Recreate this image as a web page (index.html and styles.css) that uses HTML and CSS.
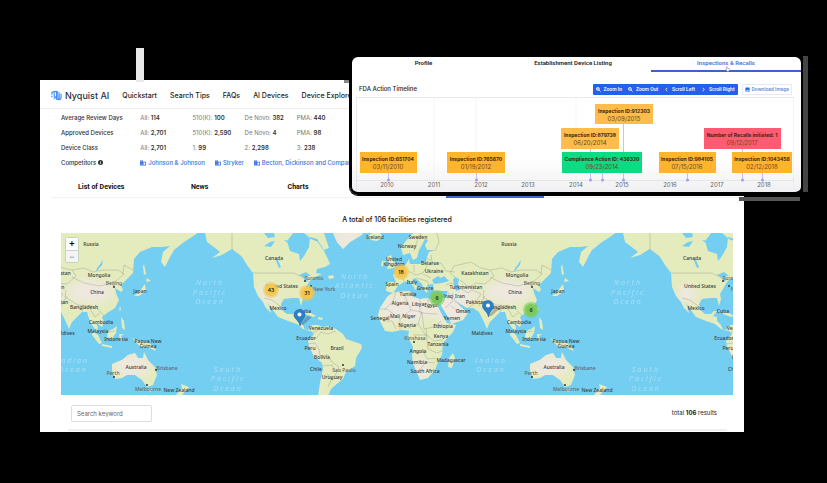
FILE: index.html
```html
<!DOCTYPE html>
<html lang="en">
<head>
<meta charset="utf-8">
<title>Nyquist AI</title>
<link rel="stylesheet" href="styles.css">
</head>
<body>
<main class="panel">
  <span class="accent accent-stem"></span>
  <span class="accent accent-notch"></span>
  <header class="topbar">
    <a class="brand" href="#">
      <svg class="brand-mark" viewBox="0 0 24 22" aria-hidden="true">
        <g fill="none" stroke="#3f8df5" stroke-width="2.500" stroke-linecap="round">
          <path d="M2 8V5.500a2.500 2.500 0 0 1 5 0V13a2 2 0 0 0 4 0"/>
          <path d="M2 12v2M7 17v1M6 2.500c3-2 6 0 6 3V16a3 3 0 0 0 6 0V9"/>
          <path d="M11 2c3 0 4 2 4 4v9M18 5v1M22 8v7c0 3-2 5-5 5-3 0-6-1-6-4"/>
        </g>
      </svg>
      <span>Nyquist AI</span>
    </a>
    <nav class="nav">
      <a href="#">Quickstart</a><a href="#">Search Tips</a><a href="#">FAQs</a><a href="#">AI Devices</a><a href="#">Device Explorer</a>
    </nav>
  </header>

  <table class="stats">
    <tr><th scope="row">Average Review Days</th><td>All: <b>114</b></td><td>510(K): <b>100</b></td><td>De Novo: <b>382</b></td><td>PMA: <b>440</b></td></tr>
    <tr><th scope="row">Approved Devices</th><td>All: <b>2,701</b></td><td>510(K): <b>2,590</b></td><td>De Novo: <b>4</b></td><td>PMA: <b>98</b></td></tr>
    <tr><th scope="row">Device Class</th><td>All: <b>2,701</b></td><td>1: <b>99</b></td><td>2: <b>2,298</b></td><td>3: <b>238</b></td></tr>
    <tr><th scope="row">Competitors <svg class="info" viewBox="0 0 10 10" aria-hidden="true"><circle cx="5" cy="5" r="5" fill="#333"/><path d="M5 4.500V8M5 2v1.200" stroke="#fff" stroke-width="1.500"/></svg></th>
      <td colspan="4"><div class="companies">
        <a href="#"><svg viewBox="0 0 12 12" aria-hidden="true"><path fill="#3b6fe0" fill-rule="evenodd" d="M0 1h6v2.500h6V11H0zM1.500 3v1h1V3zm2 0v1h1V3zm-2 2.500v1h1v-1zm2 0v1h1v-1zm-2 2.500v1h1V8zm2 0v1h1V8zM7 5v4.500h3.500V5z"/></svg>Johnson &amp; Johnson</a>
        <a href="#"><svg viewBox="0 0 12 12" aria-hidden="true"><path fill="#3b6fe0" fill-rule="evenodd" d="M0 1h6v2.500h6V11H0zM1.500 3v1h1V3zm2 0v1h1V3zm-2 2.500v1h1v-1zm2 0v1h1v-1zm-2 2.500v1h1V8zm2 0v1h1V8zM7 5v4.500h3.500V5z"/></svg>Stryker</a>
        <a href="#"><svg viewBox="0 0 12 12" aria-hidden="true"><path fill="#3b6fe0" fill-rule="evenodd" d="M0 1h6v2.500h6V11H0zM1.500 3v1h1V3zm2 0v1h1V3zm-2 2.500v1h1v-1zm2 0v1h1v-1zm-2 2.500v1h1V8zm2 0v1h1V8zM7 5v4.500h3.500V5z"/></svg>Becton, Dickinson and Company</a>
      </div></td></tr>
  </table>

  <nav class="tabs"><a href="#">List of Devices</a><a href="#">News</a><a href="#">Charts</a><span></span><span class="current"></span></nav>

  <h2 class="map-title">A total of 106 facilities registered</h2>

  <div class="map">
    <svg class="map-canvas" viewBox="0 0 672 162" role="img" aria-label="Facilities map">
      <defs>
        <filter id="soft" x="-30%" y="-30%" width="160%" height="160%"><feGaussianBlur stdDeviation="4"/></filter>
        <path id="land" d="M144 0l2 9 8 6 5 4-8 6 10-3 8-5 2-1 10 8 5 8 6 8 1 14 4 9 5 6 3 6 5 5-1-5-3-6 8 11 3 4 10 4 9 3 6 5 5 1 4-5h6l5 2 5-1 8 3 7 5 3 5 15 5 1 4-6 10-1 8-9 6-3 7-5 4-7 6-3 7h-10l2-13 3-14-1-6-8-7-5-10-1-5 6-7-3-3-6-1-2-5-4-4v-4l-4-1 4-5h-3l-3 3h-6l-5-4-1-6 3-5 8-1h7l2 8 2-7-1-5 3-5 4-7 6-5 7-3-6-1 1-4 8-2 5-3-3-7-5-10-5-8-7-2-1 10-5 9-4 5-1-7-9-3-3-10 7-9 3-5z
          M243 0h20l3 9 2 6-6 2-5-8-7-3z M272 0l4 9 6 7 7-7 12-7 1-2z M307 3l3 4 6 1 6-4-3-4h-8z
          M244 79l6 1 5 3-3 1-8-3zM257 84l5 1-1 2-4-1zM267 43l5-1 1 3-5 1z
          M328 62l6-3 15-1 3 6 7 2 8-1 7 2 3 7 5 10 4 6 9 2-3 7-10 11-1 12-4 7-3 8-7 8-8 2-2-5-5-12-1-8 1-8-5-10 1-6-7-1-10 2-7-1-5-10-2-6 2-7 7-11z M392 120l2 5-3 10-4-1 1-9z
          M352 0l-8 9-4 6 2 7 7-2 3 7 4-2 2-8 3-5 3-6 3 1-3 5 2 5 8 0-6 2-2 5-1 5-7 2-9 0-1-5-3 5-7 6-6 5 3 7h-9l-1 9 7 2 5-7 6-4 5-1 5 6 1 3 3-3-6-7 3-2 7 6 2 6 3 3 1-5-1-3 6-1 1 7h13v6h-10l5 10 8 13 1 4 12-4 5-7-7-6-8-8 9 6 5 3h6l6 4 5 10 3 7 3-7 10-10h5l3 10 7 10 1-5-3-5 7 5 2-5-2-5 5-4 8-5 4-8-3-7-1-5 6 4 2-2-2-5 7-7 5-5 1-14 6-7 12-5h10l8-1-7 6-2 10 4 5 5-10 4-7 10-8 8-5 7-5z
          M326 36l7-1 2-4-3-3-2-6-4 2 2 5zM320 33l4 0 1-5-4 0z
          M501 31l2 10-2 1-1-8zM504 45l4 3-5 1zM502 51l1 7-7 5-5 0 5-4z
          M477 73l1 4-2 1zM478 84l3 4 1 9-3-2zM450 98l5 4 4 8-3 1-7-9zM459 111l10 2 0 2-10-2zM465 98l5-2 4-3-1 7-4 6-5-2zM476 101l5 0-3 2 2 5-3 0zM489 105l7 3 8 1 6 4 3 5-9-4-6 1-5-6z
          M469 137l0-6 10-4 6-5 7-2 3 5 5 0 1-6 4 8 7 7 2 8-4 10-6 2-5-7-7-5h-8l-5 3-7 1z M505 156l5 0-3 3z M538 151l8 3-7 8h-6l6-7z"/>
        <clipPath id="coast"><use href="#land"/></clipPath>
        <g id="world">
          <use href="#land" fill="#e4ebbd"/>
          <g clip-path="url(#coast)">
            <g fill="#eee8df" filter="url(#soft)">
              <ellipse cx="345" cy="75" rx="29" ry="14"/><ellipse cx="388" cy="75" rx="18" ry="16"/><ellipse cx="447" cy="59" rx="23" ry="12"/><ellipse cx="489" cy="133" rx="19" ry="12"/><ellipse cx="405" cy="61" rx="15" ry="6"/><ellipse cx="285" cy="5" rx="14" ry="12"/><ellipse cx="361" cy="136" rx="9" ry="12"/><ellipse cx="252" cy="135" rx="5" ry="25"/><ellipse cx="208" cy="61" rx="10" ry="10"/>
            </g>
            <g fill="#73cef1">
              <path d="M371 47l6-4 3 2 3-2 5 5-7 2-8 1zM394 44l4 2-1 5 2 6-4 1-2-6-1-5zM203 13l6-4 5-1-4 6zM214 25l3 2 3 7-2 1zM238 42l7-3 5 4-5 0 2 6-3-1-2-4zM248 48l7-2-4 4zM203 0l4 5 7-1-1-4zM223 7l6 1 4-3-5 6zM453 37l7-10-1 5-5 6zM377 91l2 3-2 2z"/>
            </g>
            <path fill="none" stroke="#8c9188" stroke-width=".6" opacity=".6" d="M171 0v17l9 6 5 11M192 40h41l8 4 9 3 10-4M203 65l8 2 8 6 4 5M250 100l6-2 4-6M247 103l8 3 5-7 7 2 8-3M246 111l8-1 4 6 1 7 8-1 4 7 7 5-4 9M256 130l5 3 10-1 3 6M258 135l-2 27M266 141l5 4-4 9M335 59l-3 9-9 9M319 76h7l13 10 11-9-7-16M322 88h9l4 8M339 86v11M350 77l11 2-4 12-10 4M359 66v14l17 1M367 65v8h9M361 79l2 17 10-2 7-6M352 102h14l7 6 9-1M365 96l2 20 9 4 5-2M351 118h11l4 8 9-1M357 139l8-10 9 1M357 91l9 13M347 38l8 4 7-2 5-9M343 49l-3-9M353 39l0-7M362 41l8 4M367 31l13-1 5 8 9 1M355 45l11 3 2 4M385 52l5-2 5 3M386 58l6 10-8 7M390 73l8 6 5-1M391 60l4 10M399 55l8 5 4-3 9 4-7 10-6 4M394 44l-5-4 4-7 17-4 10 6 9 2 4 6-9 8-9-1-6 5-10-8M429 37l12-2 9 4 10-2 15 0 6 4-9 8-15 4-16-3-12-6M480 41l1-9 9 5M423 57l-1 7 13 8 13 1 7 3M418 73l6-10M439 79l2-6M447 76l5 8 5-4M455 76l7 8M465 99l7-1M501 109v6M374 18l4-9-2-9M353 18l4-13 3-5M364 25l6 2M370 22l1 7"/>
          </g>
          <g class="place">
            <text x="448" y="13">Russia</text><text x="456" y="44">Mongolia</text><text x="454" y="61">China</text><text x="471" y="52" class="city">Beijing</text><text x="497" y="60">Japan</text><text x="441" y="76">Bangladesh</text><text x="458" y="91">Cambodia</text><text x="455" y="100">Malaysia</text><text x="473" y="108">Indonesia</text><text x="505" y="110">Papua New</text><text x="505" y="115">Guinea</text><text x="493" y="136">Australia</text><text x="470" y="142" class="city">Perth</text><text x="524" y="137" class="city">Brisbane</text><text x="505" y="158" class="city">Melbourne</text><text x="536" y="159">New Zealand</text>
            <text x="213" y="27">Canada</text><text x="221" y="55">United States</text><text x="253" y="47" class="city">Toronto</text><text x="263" y="58" class="city">New York</text><text x="217" y="77">Mexico</text><text x="244" y="80">Cuba</text><text x="260" y="97">Venezuela</text><text x="245" y="107">Ecuador</text><text x="249" y="117">Peru</text><text x="276" y="117">Brazil</text><text x="261" y="126">Bolivia</text><text x="255" y="138">Chile</text><text x="283" y="139" class="city">Sao Paulo</text><text x="271" y="146">Uruguay</text>
            <text x="314" y="6">Iceland</text><text x="357" y="6">Sweden</text><text x="346" y="15">Norway</text><text x="333" y="28">United</text><text x="333" y="33">Kingdom</text><text x="369" y="32">Belarus</text><text x="373" y="40">Ukraine</text><text x="414" y="42">Kazakhstan</text><text x="331" y="53">Spain</text><text x="351" y="51">Italy</text><text x="364" y="57">Greece</text><text x="405" y="56">Turkmenistan</text><text x="347" y="63">Tunisia</text><text x="339" y="72">Algeria</text><text x="357" y="73">Libya</text><text x="370" y="74">Egypt</text><text x="387" y="65">Iraq</text><text x="399" y="65">Iran</text><text x="415" y="71">Pakistan</text><text x="402" y="80">Oman</text><text x="391" y="87">Yemen</text><text x="319" y="87">Senegal</text><text x="334" y="85">Mali</text><text x="348" y="85">Niger</text><text x="346" y="94">Nigeria</text><text x="382" y="95">Ethiopia</text><text x="380" y="105">Kenya</text><text x="354" y="107" class="city">Kinshasa</text><text x="377" y="113">Tanzania</text><text x="357" y="120">Angola</text><text x="390" y="129">Madagascar</text><text x="356" y="131">Namibia</text><text x="364" y="140">South Africa</text><text x="421" y="102">Maldives</text>
          </g>
          <g fill="#333"><circle cx="471" cy="54" r="1"/><circle cx="471" cy="144" r="1"/><circle cx="513" cy="137" r="1"/><circle cx="504" cy="152" r="1"/><circle cx="244" cy="48" r="1"/><circle cx="250" cy="53" r="1"/><circle cx="353" cy="109" r="1"/><circle cx="282" cy="132" r="1"/></g>
          <g class="ocean"><text x="294" y="46">North</text><text x="294" y="55">Atlantic</text><text x="294" y="65">Ocean</text><text x="430" y="130">Indian</text><text x="430" y="139">Ocean</text><text x="567" y="52">North</text><text x="567" y="62">Pacific</text><text x="567" y="71">Ocean</text><text x="585" y="139">South</text><text x="585" y="148">Pacific</text><text x="585" y="158">Ocean</text></g>
        </g>
      </defs>
      <rect width="672" height="162" fill="#73cef1"/>
      <use href="#world" x="-418"/><use href="#world"/><use href="#world" x="418"/>
      <g class="cluster">
        <g fill="#f3c64e"><circle cx="210" cy="57" r="8" opacity=".6"/><circle cx="210" cy="57" r="6"/><circle cx="246" cy="60" r="8" opacity=".6"/><circle cx="246" cy="60" r="6"/><circle cx="340" cy="39" r="8" opacity=".6"/><circle cx="340" cy="39" r="6"/></g>
        <g fill="#7bcb5c"><circle cx="376" cy="65" r="8" opacity=".6"/><circle cx="376" cy="65" r="6"/><circle cx="470" cy="77" r="8" opacity=".6"/><circle cx="470" cy="77" r="6"/></g>
        <text x="210" y="59">43</text><text x="246" y="62">31</text><text x="340" y="41">18</text><text x="376" y="67">6</text><text x="470" y="79">6</text>
      </g>
      <g id="pin"><path d="M239 92l7-9 5 1-9 8z" fill="#333" opacity=".3"/><path d="M239 93c-1-6-6-7-6-11a5.500 5.500 0 0 1 11 0c0 4-4 5-5 11z" fill="#2b81c9" stroke="#2467a3" stroke-width=".6"/><circle cx="238.500" cy="81.500" r="2" fill="#fff"/></g>
      <use href="#pin" x="188.500" y="-9"/>
    </svg>
    <div class="zoom"><button type="button" aria-label="Zoom in">+</button><button type="button" aria-label="Zoom out" disabled>−</button></div>
  </div>

  <div class="results">
    <input type="search" placeholder="Search keyword" aria-label="Search keyword">
    <p>total <b>106</b> results</p>
  </div>

  <section class="card">
    <nav class="card-tabs"><a href="#">Profile</a><a href="#">Establishment Device Listing</a><a href="#" class="active">Inspections &amp; Recalls</a></nav>
    <svg class="hand" viewBox="0 0 14 16" aria-hidden="true"><path d="M4 9V2c0-1.500 2-1.500 2 0v4c1-1 2-.5 2 .3 1-.8 2-.3 2 .5 1-.7 2.500 0 2.500 1V11c0 2-1.500 4-4 4-3 0-4-2-6-5-.8-1.500.7-2 1.500-1z" fill="#fff" stroke="#555"/></svg>
    <div class="card-head">
      <h3>FDA Action Timeline</h3>
      <div class="tools">
        <button type="button"><svg viewBox="0 0 12 12" aria-hidden="true"><circle cx="4.500" cy="4.500" r="3.500"/><path d="M7 7l4 4M3 4.500h3M4.500 3v3"/></svg>Zoom In</button>
        <button type="button"><svg viewBox="0 0 12 12" aria-hidden="true"><circle cx="4.500" cy="4.500" r="3.500"/><path d="M7 7l4 4M3 4.500h3"/></svg>Zoom Out</button>
        <button type="button"><svg viewBox="0 0 12 12" aria-hidden="true"><path d="M8 2L4 6l4 4"/></svg>Scroll Left</button>
        <button type="button"><svg viewBox="0 0 12 12" aria-hidden="true"><path d="M4 2l4 4-4 4"/></svg>Scroll Right</button>
      </div>
      <button type="button" class="download"><svg viewBox="0 0 12 12" aria-hidden="true"><rect x="1" y="1" width="10" height="10" rx="1" fill="#2763e8"/><path d="M2.500 9l2.500-3 2 2 1-1 2 2z" fill="#fff"/></svg>Download Image</button>
    </div>
    <svg class="timeline" viewBox="0 0 438 95" role="img" aria-label="FDA action timeline">
      <g stroke="#dcdce2" stroke-width=".6" fill="none"><path d="M0 .5H438V95M.5 0V95M0 83.500H438"/><path stroke="#efeff3" d="M78 0v83M120 0v83M220 0v83"/></g>
      <g stroke="#a9a9f2" stroke-width=".7"><path d="M32.500 75v8M120.500 75v8M234.500 51v32M246.500 75v8M267.500 27v56M331.500 75v8M386.500 51v32M406.500 75v8"/></g>
      <g fill="#9e9df5"><circle cx="32.500" cy="83" r="1.500"/><circle cx="120.500" cy="83" r="1.500"/><circle cx="234.500" cy="83" r="1.500"/><circle cx="246.500" cy="83" r="1.500"/><circle cx="267.500" cy="83" r="1.500"/><circle cx="331.500" cy="83" r="1.500"/><circle cx="386.500" cy="83" r="1.500"/><circle cx="406.500" cy="83" r="1.500"/></g>
      <g fill="#fdb52e"><rect x="4" y="55" width="57" height="21"/><rect x="91" y="55" width="58" height="21"/><rect x="303" y="55" width="57" height="21"/><rect x="376" y="55" width="60" height="21"/></g>
      <g fill="#fdbc4b"><rect x="205" y="31" width="58" height="21"/><rect x="239" y="7" width="58" height="20"/></g>
      <rect x="206" y="55" width="80" height="21" fill="#0bdb83"/><rect x="348" y="31" width="77" height="21" fill="#ff5c74"/>
      <g class="event"><text x="32" y="64">Inspection ID:651704</text><text x="120" y="64">Inspection ID:765670</text><text x="246" y="64">Compliance Action ID: 436320</text><text x="331" y="64">Inspection ID:984105</text><text x="406" y="64">Inspection ID:1043456</text><text x="234" y="40">Inspection ID:879738</text><text x="386" y="40">Number of Recalls initiated: 1</text><text x="268" y="16">Inspection ID:912303</text></g>
      <g class="date"><text x="32" y="72">03/11/2010</text><text x="120" y="72">01/19/2012</text><text x="246" y="72">09/23/2014</text><text x="331" y="72">07/15/2016</text><text x="406" y="72">02/12/2018</text><text x="234" y="48">06/20/2014</text><text x="386" y="48">09/12/2017</text><text x="268" y="24">03/09/2015</text></g>
      <g class="year"><text x="31" y="90">2010</text><text x="78" y="90">2011</text><text x="125" y="90">2012</text><text x="172" y="90">2013</text><text x="220" y="90">2014</text><text x="266" y="90">2015</text><text x="314" y="90">2016</text><text x="361" y="90">2017</text><text x="408" y="90">2018</text></g>
    </svg>
  </section>
  <span class="accent accent-side"></span>
  <span class="accent accent-base"></span>
</main>
</body>
</html>
```
FILE: styles.css
```css
* { box-sizing: border-box; }
body { margin: 0; background: #000; color: #222; font: 6px/8px Inter, "Liberation Sans", sans-serif; }
a { color: inherit; text-decoration: none; }
h2, h3, p { margin: 0; }
button, input { font: inherit; margin: 0; }
.panel { position: relative; margin: 80px 83px 0 40px; background: #fff; }
.topbar { display: flex; align-items: center; gap: 13px; height: 29px; padding: 3px 11px 0; border-bottom: 1px solid #eee; white-space: nowrap; }
.brand { display: flex; align-items: center; gap: 3px; font: 500 9px/12px Inter, sans-serif; color: #273044; }
.brand-mark { width: 11px; height: 11px; }
.nav { display: flex; gap: 13px; font-size: 7px; font-weight: 500; }
.stats { margin: 1px 0 0 21px; border-collapse: collapse; table-layout: fixed; width: 288px; color: #777; }
.stats th, .stats td { height: 15px; padding: 0; width: 52px; text-align: left; white-space: nowrap; font-weight: 400; }
.stats th { width: 79px; color: #333; font-weight: 500; }
.stats b { color: #333; font-weight: 600; }
.info { width: 5px; height: 5px; vertical-align: middle; }
.companies { display: flex; gap: 10px; color: #3b6fe0; font-weight: 500; }
.companies a { display: flex; align-items: center; gap: 2px; }
.companies svg { width: 6px; height: 6px; }
.tabs { display: grid; grid-template-columns: repeat(7, 1fr); margin: 12px 3px 0 12px; height: 16px; border-bottom: 1px solid #f2f2f2; text-align: center; font: 700 7px/10px Roboto, sans-serif; color: #111; }
.tabs .current { border-bottom: 2px solid #3b66d8; height: 16px; }
.map-title { margin: 17px 11px 0 21px; text-align: center; font-size: 7px; line-height: 10px; font-weight: 500; color: #111; }
.map { position: relative; margin: 8px 11px 0 21px; }
.map-canvas { display: block; width: 100%; }
.place text { font: 500 5px "Noto Sans", sans-serif; fill: #3c3c3c; text-anchor: middle; }
.place .city { fill: #666; }
.ocean text { font: italic 7px "Noto Sans", sans-serif; fill: #b5e6fa; letter-spacing: 2px; text-anchor: middle; opacity: .75; }
.cluster text { font: 600 5px Inter, sans-serif; text-anchor: middle; fill: #222; }
.zoom { position: absolute; left: 4px; top: 4px; width: 14px; border: 1px solid #c5d5bd; border-radius: 2px; background: #fff; }
.zoom button { display: block; width: 100%; height: 12px; padding: 0; border: 0; background: #fff; color: #000; font: 700 9px/12px "Liberation Sans", sans-serif; }
.zoom button:disabled { background: #f4f4f4; color: #aaa; border-top: 1px solid #ccc; }
.results { display: flex; justify-content: space-between; align-items: center; height: 35px; margin: 1px 17px 0 28px; padding: 1px 10px 0 3px; border-bottom: 2px solid #f0f0f0; }
.results input { width: 81px; height: 17px; padding: 0 5px; border: 1px solid #ddd; border-radius: 2px; background: #fff; font-size: 6px; outline: 0; }
.results input::placeholder { color: #666; opacity: 1; }
.panel::after { content: ""; display: block; height: 1px; }

.card { position: absolute; left: 310px; right: -59px; top: -25px; border: 2px solid #000; border-bottom-width: 3px; border-radius: 8px; background: linear-gradient(#fff 75%, #f0f0f2); box-shadow: 0 0 0 1px #000; overflow: hidden; }
.card-tabs { display: grid; grid-template-columns: 143fr 156fr 150fr; height: 15px; text-align: center; line-height: 11px; font-weight: 600; font-family: Roboto, sans-serif; }
.card-tabs .active { color: #4c74dc; border-bottom: 2px solid #3b62d5; }
.hand { position: absolute; right: 71px; top: 9px; width: 5px; height: 6px; }
.card-head { display: flex; align-items: center; height: 25px; padding: 9px 9px 0 7px; }
.card-head h3 { flex: 1; font-size: 6px; font-weight: 500; }
.tools { display: flex; background: #2460ed; border-radius: 1px; }
.card-head button { display: flex; align-items: center; gap: 3px; height: 11px; padding: 0 3px; border: 0; background: none; color: #fff; font: 500 5px/8px Roboto, sans-serif; white-space: nowrap; }
.tools svg { width: 5px; height: 5px; fill: none; stroke: #fff; stroke-width: 2; }
.card-head .download { margin-left: 4px; gap: 2px; border: 1px solid #e4e9f4; color: #6889d2; padding: 0 2px; }
.download svg { width: 5px; height: 5px; }
.timeline { display: block; width: calc(100% - 11px); margin-left: 4px; }
.timeline text { text-anchor: middle; }
.event text { font: 700 5px Inter, sans-serif; fill: #3d2507; }
.date text { font: 400 6px Inter, sans-serif; fill: #6f4814; }
.year text { font: 400 6px Inter, sans-serif; fill: #666; }
.accent { position: absolute; }
.accent-stem { left: 96px; top: -32px; width: 8px; height: 34px; background: #e9e9e9; }
.accent-notch { left: 304px; top: 0; width: 7px; height: 3px; background: #888; }
.accent-side { right: -64px; top: -24px; width: 5px; height: 136px; background: #444; }
.accent-base { right: -56px; top: 117px; width: 61px; height: 4px; background: #555; }
```
